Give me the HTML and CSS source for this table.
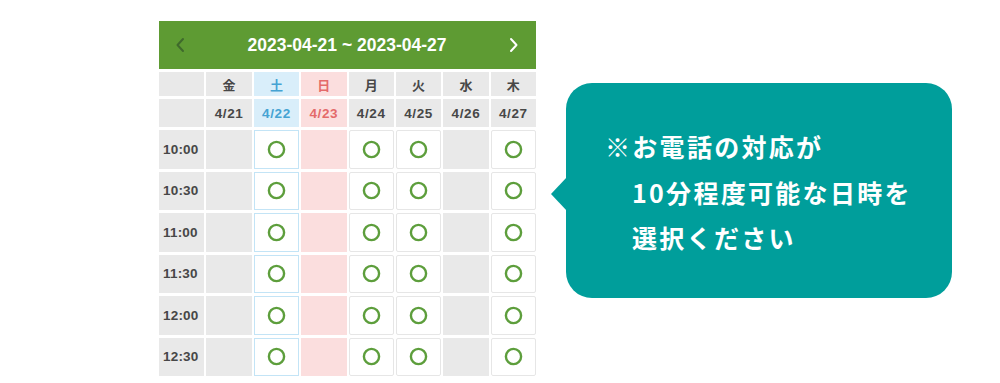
FILE: index.html
```html
<!DOCTYPE html>
<html lang="ja">
<head>
<meta charset="utf-8">
<link rel="stylesheet" href="styles.css">
</head>
<body>
<div class="page">
  <div class="cal">
    <div class="cal-head">
      <svg class="arrow prev" width="10" height="16" viewBox="0 0 10 16"><path d="M8 2 L2.5 8 L8 14" fill="none" stroke="currentColor" stroke-width="2" stroke-linecap="round" stroke-linejoin="round"/></svg>
      <span class="range">2023-04-21 ~ 2023-04-27</span>
      <svg class="arrow next" width="10" height="16" viewBox="0 0 10 16"><path d="M2 2 L7.5 8 L2 14" fill="none" stroke="currentColor" stroke-width="2" stroke-linecap="round" stroke-linejoin="round"/></svg>
    </div>
    <div class="grid" id="grid">
      <div class="c lbl"></div>
      <div class="c wd">金</div>
      <div class="c wd sat">土</div>
      <div class="c wd sun">日</div>
      <div class="c wd">月</div>
      <div class="c wd">火</div>
      <div class="c wd">水</div>
      <div class="c wd">木</div>

      <div class="c lbl"></div>
      <div class="c dt">4/21</div>
      <div class="c dt sat">4/22</div>
      <div class="c dt sun">4/23</div>
      <div class="c dt">4/24</div>
      <div class="c dt">4/25</div>
      <div class="c dt">4/26</div>
      <div class="c dt">4/27</div>
    </div>
  </div>
  <div class="bubble">
    <p class="msg">※お電話の対応が<br>10分程度可能な日時を<br>選択ください</p>
  </div>
</div>
<script src="app.js"></script>
</body>
</html>
```

FILE: app.js
```js
(function () {
  var grid = document.getElementById('grid');
  var times = ['10:00', '10:30', '11:00', '11:30', '12:00', '12:30'];
  var cols = ['closed', 'sat', 'sun', 'open', 'open', 'closed', 'open'];
  var circle = '<svg width="19" height="19" viewBox="0 0 19 19"><circle cx="9.5" cy="9.5" r="7.6" fill="none" stroke="#5d9e3c" stroke-width="2.4"/></svg>';
  times.forEach(function (t) {
    var l = document.createElement('div');
    l.className = 'c lbl time';
    l.textContent = t;
    grid.appendChild(l);
    cols.forEach(function (k) {
      var d = document.createElement('div');
      d.className = 'c slot ' + k;
      if (k === 'open' || k === 'sat') d.innerHTML = circle;
      grid.appendChild(d);
    });
  });
})();
```

FILE: styles.css
```css
html, body {
  margin: 0;
  padding: 0;
  background: #ffffff;
}

.page {
  display: flex;
  align-items: flex-start;
  padding: 21px 0 0 159px;
  font-family: "Liberation Sans", "Noto Sans CJK JP", sans-serif;
}

.cal {
  width: 377px;
  display: flex;
  flex-direction: column;
  gap: 3px;
}

.cal-head {
  height: 48px;
  background: #5e9b33;
  display: flex;
  align-items: center;
  justify-content: space-between;
  padding: 0 17px 0 16px;
  box-sizing: border-box;
}

.arrow.prev { color: #3f6a2c; }
.arrow.next { color: #ffffff; }

.range {
  color: #ffffff;
  font-weight: bold;
  font-size: 17.5px;
  letter-spacing: 0;
}

.grid {
  display: grid;
  grid-template-columns: repeat(8, 1fr);
  grid-template-rows: 24px 28px repeat(6, 38.5px);
  column-gap: 2px;
  row-gap: 3px;
}

.c {
  box-sizing: border-box;
  display: flex;
  align-items: center;
  justify-content: center;
  background: #e9e9e9;
  color: #474747;
  font-weight: bold;
}

.wd {
  font-family: "Noto Sans CJK JP", sans-serif;
  font-size: 13px;
}

.dt {
  font-size: 13.5px;
  letter-spacing: 0.6px;
  padding-top: 1px;
}

.time {
  justify-content: flex-start;
  padding-left: 4px;
  font-size: 13.5px;
  letter-spacing: 0.2px;
}

.wd.sat, .dt.sat {
  background: #d9eefa;
  color: #45a3d3;
}

.wd.sun, .dt.sun {
  background: #fbdede;
  color: #e46a6a;
}

.slot.closed { background: #e9e9e9; }

.slot.sun { background: #fbdede; }

.slot.sat {
  background: #ffffff;
  border: 1.5px solid #c3e4f6;
}

.slot.open {
  background: #ffffff;
  border: 1.5px solid #e6e6e6;
  border-radius: 2px;
}

.bubble {
  position: relative;
  margin: 62px 0 0 30px;
  width: 386px;
  height: 215px;
  box-sizing: border-box;
  background: #009e9b;
  border-radius: 26px;
  padding: 41px 0 0 66px;
}

.bubble::before {
  content: "";
  position: absolute;
  left: -15px;
  top: 94px;
  width: 0;
  height: 0;
  border-top: 17px solid transparent;
  border-bottom: 17px solid transparent;
  border-right: 16px solid #009e9b;
}

.msg {
  margin: 0;
  color: #ffffff;
  font-family: "Noto Sans CJK JP", sans-serif;
  font-weight: bold;
  font-size: 25px;
  letter-spacing: 2.3px;
  line-height: 45.5px;
  text-indent: -27px;
}
```
